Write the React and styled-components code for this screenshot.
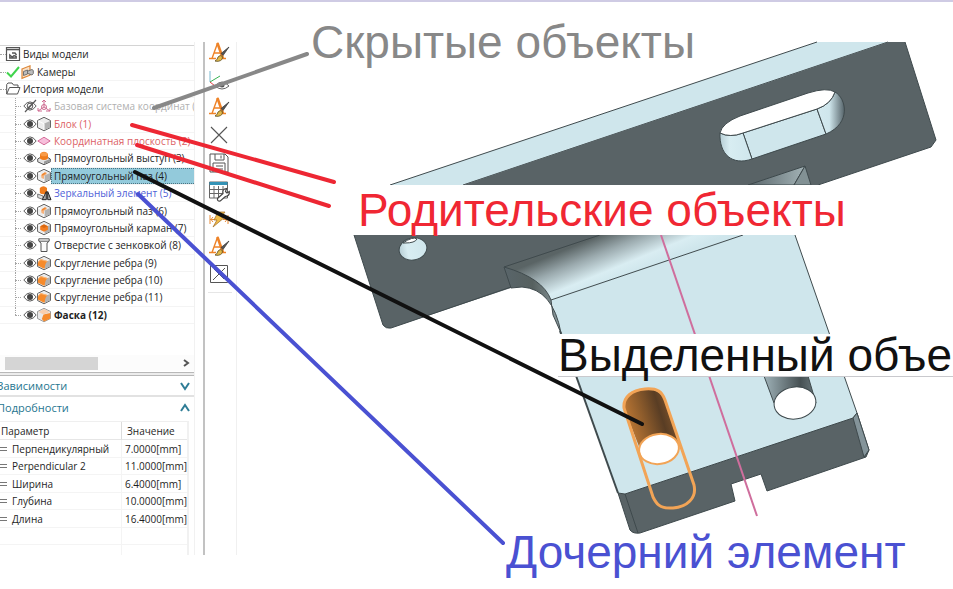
import React from "react";
import styled, { createGlobalStyle, css } from "styled-components";

const GlobalStyle = createGlobalStyle`
  * { box-sizing: border-box; }
  body { margin: 0; background: #fff; overflow: hidden; }
  button { font: inherit; color: inherit; background: none; border: 0; padding: 0; margin: 0; text-align: left; }
`;

const Page = styled.main`
  position: relative;
  min-height: 100vh;
  border-top: 2px solid #cfcbe4;
  padding-top: 40px;
  overflow: hidden;
  font: 10px/16px "Open Sans", "Noto Sans", sans-serif;
  color: #1e1e1e;
`;
const Workspace = styled.div`
  display: grid;
  grid-template-columns: 195px 42px minmax(0, 1fr);
  height: 513px;
`;
const Sidebar = styled.aside`
  display: flex;
  flex-direction: column;
  overflow: hidden;
  border-right: 1px solid #f1f1f1;
`;
const Tree = styled.ul`
  list-style: none;
  margin: 3px 0 0;
  padding: 0;
  height: 279px;
  display: grid;
  grid-auto-rows: 1fr;
  border-top: 1px solid #d4d4d4;
`;
const TreeRow = styled.li`
  position: relative;
  display: flex;
  align-items: center;
  min-height: 0;
  margin-right: 1px;
  padding-left: ${(p) => (p.$child ? 23 : 6)}px;
  border-bottom: 1px solid #f4f4f4;
  &::before {
    content: "";
    position: absolute;
    left: ${(p) => (p.$child ? 15 : 0)}px;
    top: 50%;
    width: 6px;
    border-top: 1px dotted #a5a5a5;
  }
  &::after {
    content: "";
    display: ${(p) => (p.$child ? "block" : "none")};
    position: absolute;
    left: 15px;
    top: 0;
    height: ${(p) => (p.$last ? "50%" : "100%")};
    border-left: 1px dotted #a5a5a5;
  }
`;
const IconButton = styled.button`
  flex: none;
  width: 14px;
  height: 14px;
`;
const Glyph = styled.svg`
  display: block;
  flex: none;
  width: ${(p) => p.$w || 14}px;
  height: ${(p) => p.$h || 14}px;
  overflow: visible;
`;
const tones = { hidden: "#b0b0b0", parent: "#dc5f66", child: "#4f5fd8", plain: "#1e1e1e" };
const RowLabel = styled.button`
  flex: 1;
  min-width: 0;
  align-self: stretch;
  overflow: hidden;
  white-space: nowrap;
  padding-left: 3px;
  line-height: 16px;
  color: ${(p) => tones[p.$tone] || tones.plain};
  font-weight: ${(p) => (p.$bold ? 700 : 400)};
  ${(p) => p.$selected && css`
    background: #93cadb;
    outline: 1px dotted #4c7482;
    outline-offset: -1px;
  `}
`;
const ScrollBar = styled.div`
  display: flex;
  align-items: center;
  justify-content: space-between;
  height: 16px;
  margin-top: 31px;
  padding: 0 4px 0 5px;
  background: #fcfcfc;
`;
const Thumb = styled.div`
  width: 93px;
  height: 13px;
  background: #d5d5d5;
`;
const Splitter = styled.div`
  height: 4px;
  margin-top: 1px;
  background: #ececec;
  border-top: 1px solid #b8b8b8;
  border-bottom: 1px solid #b8b8b8;
`;
const SectionHead = styled.button`
  display: flex;
  flex: none;
  align-items: center;
  justify-content: space-between;
  height: 21px;
  margin-left: -3px;
  padding-right: 4px;
  font-size: 11px;
  color: #26768f;
  border-bottom: ${(p) => (p.$line ? "2px solid #e2e2e2" : "0")};
`;
const Details = styled.div`
  flex: 1;
  margin: 3px 5px 0 0;
  border-top: 1px solid #efefef;
  border-right: 2px solid #f1f1f1;
  overflow: hidden;
`;
const Params = styled.table`
  width: 100%;
  table-layout: fixed;
  border-collapse: separate;
  border-spacing: 0;
  line-height: 16px;
  tr { height: 17px; }
  tr:nth-child(odd) { height: 18px; }
  th, td {
    padding: 0 0 0 4px;
    text-align: left;
    font-weight: 400;
    white-space: nowrap;
    border-bottom: 1px solid #f4f4f4;
  }
  th { border-bottom-color: #e6e6e6; }
  th:first-child { width: 121px; padding-left: 1px; }
  td:first-child { padding-left: 0; }
  th + th { border-left: 1px solid #dcdcdc; padding-left: 5px; }
  td + td { border-left: 1px solid #f4f4f4; padding-left: 3px; }
`;
const Name = styled.span`
  display: flex;
  align-items: center;
  gap: 5px;
`;
const EqualsMark = styled.i`
  width: 7px;
  height: 4px;
  border-top: 1px solid #777;
  border-bottom: 1px solid #777;
`;
const ToolBar = styled.nav`
  margin-left: 8px;
  border-left: 2px solid #c2c2c2;
  border-right: 1px solid #f0f0f0;
`;
const Tools = styled.div`
  display: grid;
  grid-auto-rows: 1fr;
  justify-items: center;
  align-items: center;
  height: 250px;
  margin: -4px 3px 0 0;
`;
const Tool = styled.button`
  width: 20px;
  height: 20px;
`;
const ToolRule = styled.div`
  height: 1px;
  margin: 4px 4px 0 3px;
  background: #e6e6e6;
`;
const Canvas = styled.svg`
  position: absolute;
  left: 0;
  top: -2px;
  width: 953px;
  height: 589px;
  pointer-events: none;
`;
const Callout = styled.p`
  position: absolute;
  left: ${(p) => p.$x}px;
  top: ${(p) => p.$y}px;
  margin: 0;
  min-width: ${(p) => p.$wide || 0}px;
  height: ${(p) => p.$h || 50}px;
  line-height: ${(p) => p.$h || 50}px;
  font-family: "Liberation Sans", Arial, sans-serif;
  font-size: 46px;
  white-space: nowrap;
  color: ${(p) => p.$color};
  background: ${(p) => (p.$solid ? "#fff" : "none")};
  border-bottom: ${(p) => (p.$rule ? "1px solid #c9c9cd" : "0")};
`;

const Eye = ({ off }) => (
  <Glyph viewBox="0 0 14 14" fill="none" stroke="#5a5a5a">
    <path d="M.8 7Q7-1.2 13.2 7Q7 15.2.8 7Z" />
    {off ? <><circle cx="7" cy="7" r="2.8" /><path d="M2 13 13 1M5 9l5-5" strokeWidth="1.2" /></> : <circle cx="7" cy="7" r="3" fill="#444" stroke="none" />}
  </Glyph>
);

const cubeOutline = "M7 .3 13.5 3.5V10.5L7 13.8.5 10.5V3.5Z";
function FeatureIcon({ kind }) {
  const cube = (
    <>
      <path d={cubeOutline} fill="#ececec" stroke="#666" />
      <path d="M7 6.8 13 4V10.3L7 13.2Z" fill="#b2b2b2" />
      <path d="M1.2 4 7 6.8V13" stroke="#fff" fill="none" />
    </>
  );
  const art = {
    csys: <g fill="none" stroke="#cf6a91"><path d="M7 1V8L1 12M7 8l6 4M5 3l2-2 2 2M1 9v3h4M13 9v3H9" /><circle cx="7" cy="8" r="2.5" /></g>,
    block: cube,
    plane: <path d="M.8 7 7 3.2 13.2 7 7 10.8Z" fill="#f7bfdb" stroke="#d66e9b" />,
    boss: <><path d="M.7 8 4 6h6l3.3 2v2.8L7 13.7.7 10.8Z" fill="#e4e4e4" stroke="#555" /><path d="M7 10.5 13 8v2.5L7 13.2Z" fill="#999" /><path d="M3 3Q7-1.5 11 3V7.5Q7 10.5 3 7.5Z" fill="#f07c1c" /><ellipse cx="7" cy="3.3" rx="3.6" ry="2" fill="#f89c4a" /></>,
    slot: <>{cube}<path d="M4 6 8 3.2Q10.5 3 9.5 5.2L7 6.8V10L4.5 9Z" fill="#f6b27c" /><path d="m5 6 3.5-2" stroke="#ef8832" strokeWidth="1.5" /></>,
    mirror: <><path d="M2.8 2Q6.5-1.5 10 2V7Q6 9.5 2.8 7Z" fill="#f07c1c" /><path d="M.7 8 6 10v3.5L.7 11.5Z" fill="#ddd" stroke="#777" /><path d="m9.3 5.5-4 8.2h4Zm1.4 0 3.3 8.2h-3.3Z" fill="#aaa" stroke="#222" /></>,
    pocket: <>{cube}<path d="M3.2 5.2 7 3.3l3.9 1.9v3.6L7 10.8 3.2 8.8Z" fill="#f47d20" /><path d="m3.4 5.2 3.6-1.7 3.7 1.7L7 7Z" fill="#d96812" /></>,
    hole: <path d="M1.8.8H12.2V3.2L10 5V13.5H4V5L1.8 3.2ZM2 3.2h10" fill="#fafafa" stroke="#555" />,
    blend: <>{cube}<path d="M.8 9.5Q.6 4.5 4 3.2L10.8 5.2Q8 6.5 7.8 12.4L6.500 12.600Z" fill="#f68b2c" /><path d="M1.5 6Q2.4 4 4 3.6L10 5.3" fill="none" stroke="#fab777" /></>,
    chamfer: <><path d={cubeOutline} fill="#e9e9e9" stroke="#888" strokeWidth=".8" /><path d="M6.5 6.5 13.3 5v5.5L7 13.5 4.8 11Z" fill="#f68b2c" /><path d="m1.5 4 5.5-3L13 4 6.5 6.5Z" fill="#f8cfae" /></>,
    views: <g fill="none" stroke="#555"><path d="M.5.5h13v13H.5Z" strokeWidth="1.2" /><path d="M1 2.5h12" strokeWidth="1.6" /><path d="M3.8 8v3h6.4V9.5L8 8.5 6.5 10 5 9ZM6 6h3l1.5 2" strokeWidth="1.4" /></g>,
    folder: <path d="M.7 12V2.5L2 1h4l1.5 2H12v2.5M.7 12 3.5 5.5H14L11.5 12Z" fill="#fff" stroke="#555" />,
    camera: <><path d="M2 4 10 .8v9.4L2 13.4Z" fill="#fbe0c5" stroke="#dc8637" strokeWidth="1.2" /><path d="m3.5 6.5 4-1.5v4l-4 1.5ZM8 6l4-1.5 1.3 1v3L12 10 8 8.5" fill="#bdbdbd" stroke="#666" strokeWidth=".9" /></>,
    check: <path d="M1 7.5 5 11.5 13 2" fill="none" stroke="#40d44d" strokeWidth="2" />,
  }[kind];
  return <Glyph viewBox="0 0 14 14">{art}</Glyph>;
}

const letterBrush = (
  <>
    <path d="M0 16.5h7M9.5 16.5h7.5M3 16.5 8.7.8M4.8 11h7" fill="none" stroke="#ee8328" strokeWidth="1.4" />
    <path d="m8.4 1 5.6 15.5" stroke="#ee8328" strokeWidth="2.6" />
    <path d="m20 5-8 6.5 2 2Z" fill="#555" stroke="#333" strokeWidth=".7" />
    <path d="M6 19q2.5-1 3-4 2.2-2.5 4.3-.7.8 4-3.6 4.9-2 .4-3.7-.2Z" fill="#e1b94a" stroke="#5c4a1c" strokeWidth=".8" />
  </>
);
const toolArt = [
  ["Стиль", letterBrush],
  ["Ориентация", <g fill="none"><path d="M1 1v11" stroke="#78b9d0" /><path d="m1 12 10-6" stroke="#37b352" /><path d="m1 12 5 4" stroke="#e03a42" /><path d="M6 16q7-8 14 0-7 6-14 0Z" stroke="#666" /><circle cx="13" cy="15" r="2.5" fill="#555" /></g>],
  ["Шрифт", letterBrush],
  ["Удалить", <path d="m2 2 16 16M18 2 2 18" stroke="#555" fill="none" strokeWidth="1.1" />],
  ["Сохранить", <g fill="none" stroke="#555"><path d="M1 1h15l3 3v15H1ZM6 1v6h9V1M12 2.5v3M4 19v-9h12v9M7 13h7M7 16h7" /></g>],
  ["Таблица", <g fill="none" stroke="#666"><path d="M.5 1h18v16H.5ZM.5 8.5h18M.5 12.5h18M5 5v12M9.5 5v12M14 5v12" /><path d="M.5 2.5h18" stroke="#3493b6" strokeWidth="3" /><path d="m8.5 17.5 5.5-5q-1-4.5 3.5-5l-1 3 1.5 1.5 2.3-1.5q.5 4.5-4 5l-5 4.5q-3.3.5-2.8-2.5Z" fill="#fff" stroke="#444" strokeWidth="1.2" /></g>],
  ["Обновить", <g fill="none" stroke="#e88a34"><path d="M1 6v9M1 10.5h5M14 10.5h5M19 6v9M4 8l-2 2.5L4 13M16 8l2 2.5-2 2.5" /><path d="M9 3h7l-4 5h4L4 18l4-7H5Z" fill="#f1bd48" stroke="#a87531" strokeWidth=".8" /></g>],
  ["Текст", letterBrush],
  ["Закрыть", <path d="M1.5 1.5h17v17h-17ZM4 16 16 4M5 5l10 10" fill="none" stroke="#555" />],
];

const rows = [
  ["Базовая система координат (0)", "csys", "hidden"],
  ["Блок (1)", "block", "parent"],
  ["Координатная плоскость (2)", "plane", "parent"],
  ["Прямоугольный выступ (3)", "boss"],
  ["Прямоугольный паз (4)", "slot", "plain", true],
  ["Зеркальный элемент (5)", "mirror", "child"],
  ["Прямоугольный паз (6)", "slot"],
  ["Прямоугольный карман (7)", "pocket"],
  ["Отверстие с зенковкой (8)", "hole"],
  ["Скругление ребра (9)", "blend"],
  ["Скругление ребра (10)", "blend"],
  ["Скругление ребра (11)", "blend"],
  ["Фаска (12)", "chamfer"],
];
const params = [
  ["Перпендикулярный", "7.0000[mm]"],
  ["Perpendicular 2", "11.0000[mm]"],
  ["Ширина", "6.4000[mm]"],
  ["Глубина", "10.0000[mm]"],
  ["Длина", "16.4000[mm]"],
  ["", ""],
  ["", ""],
];

const Chevron = ({ d, w, h, color }) => (
  <Glyph $w={w} $h={h} viewBox={`0 0 ${w} ${h}`} fill="none" stroke={color} strokeWidth="2"><path d={d} /></Glyph>
);

const Model = () => (
  <Canvas viewBox="0 0 953 589" aria-hidden="true">
    <defs>
      <linearGradient id="fillet" gradientUnits="userSpaceOnUse" x1="606" y1="233" x2="624" y2="277">
        <stop offset="0" stopColor="#5a6465" /><stop offset=".35" stopColor="#9aa9ad" /><stop offset=".75" stopColor="#d9edf2" /><stop offset="1" stopColor="#cfe6ec" />
      </linearGradient>
      <linearGradient id="side" x1="0" x2="1"><stop offset="0" stopColor="#59656a" /><stop offset=".5" stopColor="#56605f" /><stop offset="1" stopColor="#8d9ca0" /></linearGradient>
      <linearGradient id="gusset" x1="0" x2="1"><stop offset="0" stopColor="#59656a" /><stop offset="1" stopColor="#a2b2b5" /></linearGradient>
      <linearGradient id="bore" x1="0" x2="1"><stop offset="0" stopColor="#9fb2b8" /><stop offset=".7" stopColor="#465053" /><stop offset="1" stopColor="#6b797d" /></linearGradient>
      <linearGradient id="copper" gradientUnits="userSpaceOnUse" x1="628" y1="420" x2="673" y2="406">
        <stop offset="0" stopColor="#b87533" /><stop offset=".35" stopColor="#8a5a2b" /><stop offset=".7" stopColor="#593d24" /><stop offset="1" stopColor="#80542c" />
      </linearGradient>
      <linearGradient id="slotEnd" x1="0" x2="1"><stop offset="0" stopColor="#d4eaf0" /><stop offset=".45" stopColor="#cfe6ec" /><stop offset="1" stopColor="#56646a" /></linearGradient>
      <linearGradient id="slotStart" x1="0" x2="1"><stop offset="0" stopColor="#b6cdd4" /><stop offset=".3" stopColor="#d8edf2" /><stop offset="1" stopColor="#cfe6ec" /></linearGradient>
    </defs>

    <g stroke="#3f4a4d" strokeWidth="1" strokeLinejoin="round">
      <path d="M390 185 817 42H888L463 185Z" fill="#cfe6ec" stroke="none" />
      <path d="M390 185 817 42M463 185 888 42" fill="none" />
      <path d="M463 185 888 42H905L936 140 931 147 818 185Z" fill="#596366" stroke="none" />
      <path d="M905 42 936 140 931 147 818 185" fill="none" />
      <path d="M354 235 383 325Q386 329 391 328L511 288 600 235Z" fill="#596366" stroke="none" />
      <path d="M354 235 383 325Q386 329 391 328L511 287" fill="none" />
      <path d="M748 185 805 166 794 185Z" fill="url(#gusset)" />
      <path d="M805 166 811 185H794Z" fill="#829194" />
      <path d="M551 300 743 235H795L857 413 853 418 625 494 618 493 561 333Z" fill="#cfe6ec" stroke="none" />
      <path d="M504 267 600 235H743L551 300Q543 280 504 267Z" fill="url(#fillet)" stroke="none" />
      <path d="M504 267 600 235M551 300 743 235" fill="none" />
      <path d="M504 267Q543 278 551 300L553 315 561 333Q553 289 522 287L511 288Z" fill="url(#side)" />
      <path d="M560 331 618 493" strokeWidth="2" />
      <path d="M795 235 857 413" />
    </g>

    <g stroke="#3f4a4d" strokeWidth="1">
      <path d="M743 133 817 109 826 134 752 159Z" fill="#cfe6ec" />
      <path d="M720 133Q730 138 743 133L752 159C732 166 719 154 720 133Z" fill="url(#slotStart)" />
      <path d="M817 109Q831 104 835 92C846 98 852 123 826 134Z" fill="url(#slotEnd)" />
      <path d="M720 133Q722 123 740 116L808 93Q827 87 835 92 831 104 817 109L743 133Q730 138 720 133Z" fill="#fff" />
      <ellipse cx="413" cy="249" rx="14" ry="11" transform="rotate(-12 413 249)" fill="url(#slotStart)" />
      <path d="M403 243Q413 236 417 239 415 243 405 243Z" fill="#fff" />
    </g>

    <g stroke="#3f4a4d" strokeWidth="1" strokeLinejoin="round">
      <path d="M764 376 774 403H816L808 376Z" fill="url(#bore)" />
      <ellipse cx="795" cy="403" rx="21" ry="16" transform="rotate(-8 795 403)" fill="#fff" />
      <path d="M618 493 625 494 853 418 857 413 869 450 866 457 767 491 761 474 731 484 735 501 640 533Q633 534 630 530Z" fill="#596366" />
      <path d="M625 494 638 533" />
      <path d="M853 418 857 413 869 450 864 457Z" fill="#84949a" />
    </g>

    <path d="M624 408Q624 390 648 389 661 390 665 400L679 443 659 434 640 449Z" fill="url(#copper)" />
    <ellipse cx="659" cy="449" rx="20" ry="15" transform="rotate(-8 659 449)" fill="#fff" stroke="#f2a456" strokeWidth="2" />
    <path d="M624 408C623 397 632 390 645 389S662 392 665 400L694 485C697 498 687 507 673 508S656 503 653 497Z" fill="none" stroke="#f2a456" strokeWidth="3" />
    <path d="M661 235 757 516" stroke="#cf6e9d" strokeWidth="2" />
  </Canvas>
);

const Leaders = () => (
  <Canvas viewBox="0 0 953 589" aria-hidden="true" fill="none" strokeLinecap="round">
    <path d="M154 108 307 54" stroke="#888" strokeWidth="4" />
    <path d="M132 125 334 182M137 145 329 206" stroke="#ed2733" strokeWidth="4" />
    <path d="M135 172 642 424" stroke="#111" strokeWidth="4" />
    <path d="M138 194 503 543" stroke="#4a51d2" strokeWidth="4" />
  </Canvas>
);

export default function App() {
  return (
    <Page>
      <GlobalStyle />
      <Workspace>
        <Sidebar>
          <Tree>
            <TreeRow><FeatureIcon kind="views" /><RowLabel>Виды модели</RowLabel></TreeRow>
            <TreeRow><FeatureIcon kind="check" /><FeatureIcon kind="camera" /><RowLabel>Камеры</RowLabel></TreeRow>
            <TreeRow><FeatureIcon kind="folder" /><RowLabel>История модели</RowLabel></TreeRow>
            {rows.map(([label, kind, tone, selected], i) => (
              <TreeRow key={label} $child $last={i === rows.length - 1}>
                <IconButton aria-label="Видимость"><Eye off={tone === "hidden"} /></IconButton>
                <FeatureIcon kind={kind} />
                <RowLabel $tone={tone} $selected={selected} $bold={kind === "chamfer"}>{label}</RowLabel>
              </TreeRow>
            ))}
          </Tree>
          <ScrollBar><Thumb /><Chevron w={7} h={8} d="M1 1 5 4 1 7" color="#555" /></ScrollBar>
          <Splitter />
          <SectionHead $line>Зависимости<Chevron w={10} h={8} d="M1 1 5 7 9 1" color="#2f7d96" /></SectionHead>
          <SectionHead>Подробности<Chevron w={10} h={8} d="M1 7 5 1 9 7" color="#2f7d96" /></SectionHead>
          <Details>
            <Params>
              <thead><tr><th>Параметр</th><th>Значение</th></tr></thead>
              <tbody>
                {params.map(([name, value], i) => (
                  <tr key={i}>
                    <td>{name && <Name><EqualsMark />{name}</Name>}</td>
                    <td>{value}</td>
                  </tr>
                ))}
              </tbody>
            </Params>
          </Details>
        </Sidebar>
        <ToolBar>
          <Tools>
            {toolArt.map(([name, art]) => (
              <Tool key={name} aria-label={name}><Glyph $w={20} $h={20} viewBox="0 0 20 20">{art}</Glyph></Tool>
            ))}
          </Tools>
          <ToolRule />
        </ToolBar>
      </Workspace>
      <Model />
      <Callout $x={311} $y={15} $color="#888">Скрытые объекты</Callout>
      <Callout $x={358} $y={183} $wide={595} $color="#f02733" $solid>Родительские объекты</Callout>
      <Callout $x={558} $y={332} $h={43} $wide={395} $color="#111" $solid $rule>Выделенный объе</Callout>
      <Callout $x={506} $y={525} $color="#4a51d2">Дочерний элемент</Callout>
      <Leaders />
    </Page>
  );
}
